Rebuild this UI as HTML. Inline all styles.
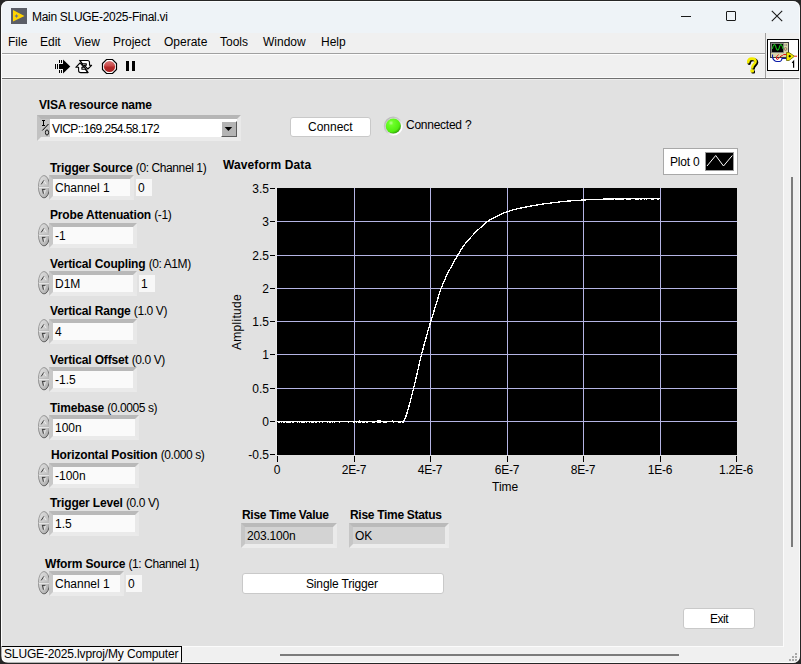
<!DOCTYPE html>
<html><head><meta charset="utf-8">
<style>
html,body{margin:0;padding:0;}
body{width:801px;height:664px;position:relative;overflow:hidden;background:#1e1e1e;font-family:"Liberation Sans",sans-serif;}
.a{position:absolute;}
.t{position:absolute;font-size:12px;line-height:12px;white-space:nowrap;color:#000;}
.b{font-weight:bold;}
#win{position:absolute;left:0;top:0;width:801px;height:664px;overflow:hidden;background:#e1e1e1;}
#edge{position:absolute;left:1px;top:1px;width:799px;height:662px;box-sizing:border-box;border-radius:7px;box-shadow:0 0 0 12px #262626,inset 0 0 0 1px rgba(255,255,255,0.7);}
.fr{position:absolute;box-sizing:border-box;border-style:solid;border-width:3px;border-color:#c3c3c3 #dadada #e9e9e9 #cfcfcf;background:#fafafa;}
.spin{position:absolute;width:12px;height:23px;}
.nbox{position:absolute;background:#f7f7f7;}
.btn{position:absolute;box-sizing:border-box;background:#fff;border:1px solid #c9c9c9;border-radius:3px;}
.yl{position:absolute;font-size:12px;line-height:12px;white-space:nowrap;text-align:right;width:40px;}
.xl{position:absolute;font-size:12px;line-height:12px;white-space:nowrap;text-align:center;width:60px;}
</style></head><body>
<div id="win">
<!-- title bar -->
<div class="a" style="left:0;top:0;width:801px;height:33px;background:#eef3f7;"></div>
<svg class="a" style="left:11px;top:8px" width="16" height="16" viewBox="0 0 16 16">
 <rect x="0" y="0" width="16" height="16" fill="#5b5e66"/>
 <path d="M2,2 L13.5,8 L2,13.5 Z" fill="#ffd400"/>
 <path d="M5.5,6 L6.2,7.3 L7.5,8 L6.2,8.7 L5.5,10 L4.8,8.7 L3.5,8 L4.8,7.3Z" fill="#66708a"/>
</svg>
<div class="t" style="left:32px;top:11px;letter-spacing:-0.3px;">Main SLUGE-2025-Final.vi</div>
<!-- window controls -->
<div class="a" style="left:681px;top:16px;width:10px;height:1px;background:#1a1a1a;"></div>
<div class="a" style="left:726px;top:11px;width:8px;height:8px;border:1px solid #1a1a1a;border-radius:1px;"></div>
<svg class="a" style="left:771px;top:10px" width="12" height="12" viewBox="0 0 12 12"><path d="M0.8,0.8 L11.2,11.2 M11.2,0.8 L0.8,11.2" stroke="#1a1a1a" stroke-width="1.1"/></svg>
<!-- menu bar -->
<div class="a" style="left:0;top:33px;width:801px;height:46px;background:#f0f0f0;"></div>
<div class="a" style="left:0;top:53px;width:765px;height:1px;background:#a0a0a0;"></div>
<div class="a" style="left:0;top:54px;width:765px;height:1px;background:#fdfdfd;"></div>
<div class="a" style="left:0;top:77px;width:801px;height:1px;background:#fbfbfb;"></div>
<div class="a" style="left:765px;top:33px;width:1px;height:46px;background:#a0a0a0;"></div>
<div class="a" style="left:0;top:78px;width:801px;height:1px;background:#707070;"></div>
<div class="t" style="left:8px;top:36px;">File</div>
<div class="t" style="left:40px;top:36px;">Edit</div>
<div class="t" style="left:74px;top:36px;">View</div>
<div class="t" style="left:113px;top:36px;">Project</div>
<div class="t" style="left:164px;top:36px;">Operate</div>
<div class="t" style="left:220px;top:36px;">Tools</div>
<div class="t" style="left:263px;top:36px;">Window</div>
<div class="t" style="left:321px;top:36px;">Help</div>
<!-- toolbar icons -->
<svg class="a" style="left:52px;top:56px" width="44" height="20" viewBox="0 0 44 20" shape-rendering="crispEdges">
 <rect x="3" y="8" width="1" height="5" fill="#000"/>
 <rect x="5" y="8" width="1" height="5" fill="#000"/>
 <rect x="7" y="4" width="1" height="3" fill="#000"/>
 <rect x="9" y="4" width="1" height="3" fill="#000"/>
 <rect x="7" y="14" width="1" height="3" fill="#000"/>
 <rect x="9" y="14" width="1" height="3" fill="#000"/>
 <rect x="7" y="8" width="5" height="5" fill="#000"/>
</svg>
<svg class="a" style="left:52px;top:56px" width="44" height="20" viewBox="0 0 44 20">
 <path d="M11,3.5 L18.3,10.5 L11,17.5 Z" fill="#000"/>
 <g transform="translate(21,1)">
 <path d="M7,3.5 L14.5,3.5 Q16.5,3.5 16.5,5.5 L16.5,8.3 L18.6,8.3 L14.8,12 L11.3,8.3 L13.3,8.3 L13.3,6.8 L9.4,6.8 Z" fill="#fff" stroke="#000" stroke-width="1.1" stroke-linejoin="round"/>
 <path d="M7,6 L11,10.3 L8.9,10.3 L8.9,12.2 L12.3,12.2 L14.8,15.6 L7.8,15.6 Q5.6,15.6 5.6,13.4 L5.6,10.3 L2.8,10.3 Z" fill="#fff" stroke="#000" stroke-width="1.1" stroke-linejoin="round"/>
 <path d="M6.5,3 L15.3,15.9" stroke="#000" stroke-width="1.1"/>
 </g>
</svg>
<svg class="a" style="left:101px;top:58px" width="17" height="17" viewBox="0 0 17 17">
 <defs><linearGradient id="rg" x1="0" y1="0" x2="0" y2="1"><stop offset="0" stop-color="#d87878"/><stop offset="0.45" stop-color="#c84848"/><stop offset="0.55" stop-color="#b42828"/><stop offset="1" stop-color="#a82424"/></linearGradient></defs>
 <path d="M5.5,1.5 L11.5,1.5 L15.5,5.5 L15.5,11.5 L11.5,15.5 L5.5,15.5 L1.5,11.5 L1.5,5.5 Z" fill="#fff" stroke="#000" stroke-width="1.2"/>
 <circle cx="8.5" cy="8.5" r="5.6" fill="url(#rg)"/>
</svg>
<div class="a" style="left:126px;top:61px;width:3px;height:10px;background:#000;"></div>
<div class="a" style="left:132px;top:61px;width:3px;height:10px;background:#000;"></div>
<!-- help icon -->
<svg class="a" style="left:745px;top:57px" width="16" height="18" viewBox="0 0 16 18">
 <g transform="translate(1,1)">
 <path d="M3.2,5.2 C3.2,1.8 5.3,1.6 7,1.6 C9,1.6 10.6,2.7 10.6,4.6 C10.6,6.8 7.2,7.6 7.2,10.4" fill="none" stroke="#000" stroke-width="3.4" stroke-linecap="round"/>
 <rect x="5.4" y="12.3" width="3.6" height="3.2" rx="1" fill="#000"/>
 </g>
 <path d="M3.2,5.2 C3.2,1.8 5.3,1.6 7,1.6 C9,1.6 10.6,2.7 10.6,4.6 C10.6,6.8 7.2,7.6 7.2,10.4" fill="none" stroke="#f2ea00" stroke-width="2.6" stroke-linecap="round"/>
 <rect x="5.4" y="12.3" width="3.6" height="3.2" rx="1" fill="#f2ea00"/>
</svg>
<!-- VI icon -->
<svg class="a" style="left:766px;top:38px" width="34" height="34" viewBox="0 0 34 34">
 <rect x="1.5" y="1.5" width="31" height="31" fill="#fff" stroke="#000" stroke-width="1"/>
 <rect x="4.5" y="4.5" width="18" height="15" fill="#d8d4aa" stroke="#3a3a3a" stroke-width="1"/>
 <rect x="5.5" y="5.5" width="12" height="9" fill="#000" stroke="#8a8a8a" stroke-width="0.8"/>
 <path d="M6.3,11 C7.5,5.5 9,5.5 10,9.5 C11,13 12.3,13 13.3,9.5 C14.3,5.5 15.8,5.5 17,11" fill="none" stroke="#18c018" stroke-width="1.1"/>
 <circle cx="19.5" cy="11" r="1.4" fill="#f0c090" stroke="#555" stroke-width="0.6"/>
 <path d="M19,6 v2 M20.5,6 v2" stroke="#777" stroke-width="0.6"/>
 <path d="M6.5,16.5 L6.5,19.5 Q8,23.5 11,23.5 L13.5,23.5 Q15.5,23.5 16,20.5 L21,20.5" fill="none" stroke="#0a1aa8" stroke-width="1.1"/>
 <path d="M12.5,16.5 Q9.5,19 10.5,21 Q12,22.5 13.5,19.5 Q15,17.5 16.5,17.5 L17.5,16.5 L21,16.5" fill="none" stroke="#e81010" stroke-width="1"/>
 <path d="M20.5,14.5 L23,14.5 L28.5,18.2 L23,22.5 L20.5,22.5 Z" fill="#f0e800" stroke="#6a6a00" stroke-width="0.8"/>
 <path d="M22.5,18.2 h2.4 M23.7,17 v2.4" stroke="#000" stroke-width="1"/>
 <path d="M28.5,18.2 L31,18.2" stroke="#e81010" stroke-width="1"/>
 <path d="M26.2,24.8 L27.6,23.3 L27.6,29.7" fill="none" stroke="#000" stroke-width="1.2"/>
</svg>
<!-- panel -->
<div class="a" style="left:0;top:79px;width:783px;height:567px;background:#e1e1e1;"></div>
<div class="a" style="left:0;top:79px;width:783px;height:1px;background:#ededed;"></div>
<div class="a" style="left:1px;top:33px;width:1px;height:613px;background:#fbfbfb;"></div>
<!-- vertical scrollbar -->
<div class="a" style="left:783px;top:79px;width:18px;height:567px;background:#f0f0f0;"></div>
<div class="a" style="left:791px;top:177px;width:2px;height:370px;background:#7c7c7c;"></div>
<!-- horizontal scrollbar -->
<div class="a" style="left:0;top:646px;width:801px;height:18px;background:#f0f0f0;"></div>
<div class="a" style="left:280px;top:654px;width:399px;height:2px;background:#7c7c7c;"></div>
<div class="a" style="left:783px;top:79px;width:1px;height:568px;background:#fbfbfb;"></div>
<div class="a" style="left:0;top:646px;width:784px;height:1px;background:#fbfbfb;"></div>
<svg class="a" style="left:788px;top:652px" width="11" height="11" shape-rendering="crispEdges"><g fill="#a8a8a8"><rect x="7" y="1" width="2" height="2"/><rect x="4" y="4" width="2" height="2"/><rect x="7" y="4" width="2" height="2"/><rect x="1" y="7" width="2" height="2"/><rect x="4" y="7" width="2" height="2"/><rect x="7" y="7" width="2" height="2"/></g></svg>
<!-- status box -->
<div class="a" style="left:1px;top:646px;width:181px;height:17px;box-sizing:border-box;border:1px solid #000;background:#f6f6f6;"></div>
<div class="t" style="left:4px;top:648px;letter-spacing:-0.15px;">SLUGE-2025.lvproj/My Computer</div>

<svg width="0" height="0" style="position:absolute"><defs><linearGradient id="sgf" x1="0" y1="0" x2="1" y2="1"><stop offset="0" stop-color="#e2e2e2"/><stop offset="0.55" stop-color="#c6c6c6"/><stop offset="1" stop-color="#a4a4a4"/></linearGradient><linearGradient id="sgs" x1="0" y1="0" x2="1" y2="1"><stop offset="0" stop-color="#a8a8a8"/><stop offset="0.5" stop-color="#7a7a7a"/><stop offset="1" stop-color="#303030"/></linearGradient></defs></svg>
<div class="t b" style="left:39px;top:99px;letter-spacing:-0.2px;">VISA resource name</div>
<div class="fr" style="left:37px;top:115px;width:204px;height:26px;border-width:4px;border-color:#b6b6b6 #e9e9e9 #ebebeb #c2c2c2;background:#fff;"></div>
<div class="a" style="left:41px;top:119px;width:9px;height:18px;background:#c6c6c6;"></div>
<svg class="a" style="left:40px;top:119px" width="11" height="18" viewBox="0 0 11 18"><path d="M2,1.5 h3 M3.5,1.5 v5 M2,6.5 h3" stroke="#000" stroke-width="1" fill="none"/><path d="M2.3,11.5 L8.5,5" stroke="#000" stroke-width="1"/><ellipse cx="7" cy="13.5" rx="1.6" ry="2.6" fill="none" stroke="#000" stroke-width="0.9"/></svg>
<div class="t" style="left:52px;top:123px;letter-spacing:-0.55px;">VICP::169.254.58.172</div>
<div class="a" style="left:221px;top:121px;width:16px;height:16px;box-sizing:border-box;background:#b4b4b4;border:1px solid;border-color:#ffffff #5a5a5a #5a5a5a #ffffff;"></div>
<svg class="a" style="left:221px;top:121px" width="16" height="16"><path d="M3.7,5.9 L11.2,5.9 L7.45,10 Z" fill="#000"/></svg>
<div class="btn" style="left:290px;top:117px;width:81px;height:20px;"></div>
<div class="t" style="left:308px;top:121px;">Connect</div>
<svg class="a" style="left:383px;top:116px" width="21" height="21" viewBox="0 0 21 21">
<defs><radialGradient id="led" cx="0.35" cy="0.3" r="0.75"><stop offset="0" stop-color="#b8ff90"/><stop offset="0.22" stop-color="#6cff28"/><stop offset="0.75" stop-color="#52ee10"/><stop offset="1" stop-color="#2c9a06"/></radialGradient>
<linearGradient id="ledr" x1="0" y1="0" x2="1" y2="1"><stop offset="0" stop-color="#b4b4b4"/><stop offset="0.5" stop-color="#cfcfcf"/><stop offset="0.75" stop-color="#ffffff"/><stop offset="1" stop-color="#ffffff"/></linearGradient></defs>
<circle cx="10.3" cy="10" r="8.7" fill="none" stroke="url(#ledr)" stroke-width="1.6"/>
<circle cx="10.3" cy="10" r="7.6" fill="url(#led)"/>
</svg>
<div class="t" style="left:406px;top:119px;letter-spacing:-0.25px;">Connected ?</div>
<div class="t" style="left:50px;top:162px;letter-spacing:-0.15px;"><b>Trigger Source</b> <span style="letter-spacing:-0.4px">(0: Channel 1)</span></div>
<svg class="a" style="left:38px;top:175px" width="12" height="24" viewBox="0 0 12 24">
<ellipse cx="6" cy="11.7" rx="5.6" ry="11.2" fill="url(#sgf)" stroke="url(#sgs)" stroke-width="0.9"/>
<path d="M0.8,12.3 h10.4" stroke="#f2f2f2" stroke-width="0.9"/>
<path d="M0.8,11.4 h10.4" stroke="#b0b0b0" stroke-width="0.6"/>
<path d="M3.2,9.4 L5.8,5.4" stroke="#3a3a3a" stroke-width="1"/>
<path d="M6,6 L8.2,9.2" stroke="#f4f4f4" stroke-width="0.9"/>
<path d="M3.9,14.4 h3.6 M4.5,14.5 L5.4,18.7" stroke="#3a3a3a" stroke-width="1"/>
<path d="M7.3,14.7 L6.5,18.5" stroke="#f4f4f4" stroke-width="0.9"/>
</svg>
<div class="fr" style="left:49px;top:175px;width:85px;height:25px;border-width:4px 4px 4px 4px;border-color:#b9b9b9 #e8e8e8 #eaeaea #c8c8c8;"></div>
<div class="t" style="left:55px;top:182px;">Channel 1</div>
<div class="nbox" style="left:136px;top:179px;width:16px;height:17px;"></div>
<div class="t" style="left:138px;top:182px;">0</div>
<div class="t" style="left:50px;top:209px;letter-spacing:-0.15px;"><b>Probe Attenuation</b> <span style="letter-spacing:-0.4px">(-1)</span></div>
<svg class="a" style="left:38px;top:223px" width="12" height="24" viewBox="0 0 12 24">
<ellipse cx="6" cy="11.7" rx="5.6" ry="11.2" fill="url(#sgf)" stroke="url(#sgs)" stroke-width="0.9"/>
<path d="M0.8,12.3 h10.4" stroke="#f2f2f2" stroke-width="0.9"/>
<path d="M0.8,11.4 h10.4" stroke="#b0b0b0" stroke-width="0.6"/>
<path d="M3.2,9.4 L5.8,5.4" stroke="#3a3a3a" stroke-width="1"/>
<path d="M6,6 L8.2,9.2" stroke="#f4f4f4" stroke-width="0.9"/>
<path d="M3.9,14.4 h3.6 M4.5,14.5 L5.4,18.7" stroke="#3a3a3a" stroke-width="1"/>
<path d="M7.3,14.7 L6.5,18.5" stroke="#f4f4f4" stroke-width="0.9"/>
</svg>
<div class="fr" style="left:49px;top:223px;width:88px;height:25px;border-width:4px 4px 4px 4px;border-color:#b9b9b9 #e8e8e8 #eaeaea #c8c8c8;"></div>
<div class="t" style="left:55px;top:230px;">-1</div>
<div class="t" style="left:50px;top:258px;letter-spacing:-0.15px;"><b>Vertical Coupling</b> <span style="letter-spacing:-0.4px">(0: A1M)</span></div>
<svg class="a" style="left:38px;top:271px" width="12" height="24" viewBox="0 0 12 24">
<ellipse cx="6" cy="11.7" rx="5.6" ry="11.2" fill="url(#sgf)" stroke="url(#sgs)" stroke-width="0.9"/>
<path d="M0.8,12.3 h10.4" stroke="#f2f2f2" stroke-width="0.9"/>
<path d="M0.8,11.4 h10.4" stroke="#b0b0b0" stroke-width="0.6"/>
<path d="M3.2,9.4 L5.8,5.4" stroke="#3a3a3a" stroke-width="1"/>
<path d="M6,6 L8.2,9.2" stroke="#f4f4f4" stroke-width="0.9"/>
<path d="M3.9,14.4 h3.6 M4.5,14.5 L5.4,18.7" stroke="#3a3a3a" stroke-width="1"/>
<path d="M7.3,14.7 L6.5,18.5" stroke="#f4f4f4" stroke-width="0.9"/>
</svg>
<div class="fr" style="left:49px;top:271px;width:88px;height:25px;border-width:4px 4px 4px 4px;border-color:#b9b9b9 #e8e8e8 #eaeaea #c8c8c8;"></div>
<div class="t" style="left:55px;top:278px;">D1M</div>
<div class="nbox" style="left:139px;top:275px;width:16px;height:17px;"></div>
<div class="t" style="left:141px;top:278px;">1</div>
<div class="t" style="left:50px;top:305px;letter-spacing:-0.15px;"><b>Vertical Range</b> <span style="letter-spacing:-0.4px">(1.0 V)</span></div>
<svg class="a" style="left:38px;top:319px" width="12" height="24" viewBox="0 0 12 24">
<ellipse cx="6" cy="11.7" rx="5.6" ry="11.2" fill="url(#sgf)" stroke="url(#sgs)" stroke-width="0.9"/>
<path d="M0.8,12.3 h10.4" stroke="#f2f2f2" stroke-width="0.9"/>
<path d="M0.8,11.4 h10.4" stroke="#b0b0b0" stroke-width="0.6"/>
<path d="M3.2,9.4 L5.8,5.4" stroke="#3a3a3a" stroke-width="1"/>
<path d="M6,6 L8.2,9.2" stroke="#f4f4f4" stroke-width="0.9"/>
<path d="M3.9,14.4 h3.6 M4.5,14.5 L5.4,18.7" stroke="#3a3a3a" stroke-width="1"/>
<path d="M7.3,14.7 L6.5,18.5" stroke="#f4f4f4" stroke-width="0.9"/>
</svg>
<div class="fr" style="left:49px;top:319px;width:88px;height:25px;border-width:4px 4px 4px 4px;border-color:#b9b9b9 #e8e8e8 #eaeaea #c8c8c8;"></div>
<div class="t" style="left:55px;top:326px;">4</div>
<div class="t" style="left:50px;top:354px;letter-spacing:-0.15px;"><b>Vertical Offset</b> <span style="letter-spacing:-0.4px">(0.0 V)</span></div>
<svg class="a" style="left:38px;top:367px" width="12" height="24" viewBox="0 0 12 24">
<ellipse cx="6" cy="11.7" rx="5.6" ry="11.2" fill="url(#sgf)" stroke="url(#sgs)" stroke-width="0.9"/>
<path d="M0.8,12.3 h10.4" stroke="#f2f2f2" stroke-width="0.9"/>
<path d="M0.8,11.4 h10.4" stroke="#b0b0b0" stroke-width="0.6"/>
<path d="M3.2,9.4 L5.8,5.4" stroke="#3a3a3a" stroke-width="1"/>
<path d="M6,6 L8.2,9.2" stroke="#f4f4f4" stroke-width="0.9"/>
<path d="M3.9,14.4 h3.6 M4.5,14.5 L5.4,18.7" stroke="#3a3a3a" stroke-width="1"/>
<path d="M7.3,14.7 L6.5,18.5" stroke="#f4f4f4" stroke-width="0.9"/>
</svg>
<div class="fr" style="left:49px;top:367px;width:88px;height:25px;border-width:4px 4px 4px 4px;border-color:#b9b9b9 #e8e8e8 #eaeaea #c8c8c8;"></div>
<div class="t" style="left:55px;top:374px;">-1.5</div>
<div class="t" style="left:50px;top:402px;letter-spacing:-0.15px;"><b>Timebase</b> <span style="letter-spacing:-0.4px">(0.0005 s)</span></div>
<svg class="a" style="left:38px;top:415px" width="12" height="24" viewBox="0 0 12 24">
<ellipse cx="6" cy="11.7" rx="5.6" ry="11.2" fill="url(#sgf)" stroke="url(#sgs)" stroke-width="0.9"/>
<path d="M0.8,12.3 h10.4" stroke="#f2f2f2" stroke-width="0.9"/>
<path d="M0.8,11.4 h10.4" stroke="#b0b0b0" stroke-width="0.6"/>
<path d="M3.2,9.4 L5.8,5.4" stroke="#3a3a3a" stroke-width="1"/>
<path d="M6,6 L8.2,9.2" stroke="#f4f4f4" stroke-width="0.9"/>
<path d="M3.9,14.4 h3.6 M4.5,14.5 L5.4,18.7" stroke="#3a3a3a" stroke-width="1"/>
<path d="M7.3,14.7 L6.5,18.5" stroke="#f4f4f4" stroke-width="0.9"/>
</svg>
<div class="fr" style="left:49px;top:415px;width:90px;height:25px;border-width:4px 4px 4px 4px;border-color:#b9b9b9 #e8e8e8 #eaeaea #c8c8c8;"></div>
<div class="t" style="left:55px;top:422px;">100n</div>
<div class="t" style="left:51px;top:449px;letter-spacing:-0.15px;"><b>Horizontal Position</b> <span style="letter-spacing:-0.4px">(0.000 s)</span></div>
<svg class="a" style="left:38px;top:463px" width="12" height="24" viewBox="0 0 12 24">
<ellipse cx="6" cy="11.7" rx="5.6" ry="11.2" fill="url(#sgf)" stroke="url(#sgs)" stroke-width="0.9"/>
<path d="M0.8,12.3 h10.4" stroke="#f2f2f2" stroke-width="0.9"/>
<path d="M0.8,11.4 h10.4" stroke="#b0b0b0" stroke-width="0.6"/>
<path d="M3.2,9.4 L5.8,5.4" stroke="#3a3a3a" stroke-width="1"/>
<path d="M6,6 L8.2,9.2" stroke="#f4f4f4" stroke-width="0.9"/>
<path d="M3.9,14.4 h3.6 M4.5,14.5 L5.4,18.7" stroke="#3a3a3a" stroke-width="1"/>
<path d="M7.3,14.7 L6.5,18.5" stroke="#f4f4f4" stroke-width="0.9"/>
</svg>
<div class="fr" style="left:49px;top:463px;width:90px;height:25px;border-width:4px 4px 4px 4px;border-color:#b9b9b9 #e8e8e8 #eaeaea #c8c8c8;"></div>
<div class="t" style="left:55px;top:470px;">-100n</div>
<div class="t" style="left:50px;top:497px;letter-spacing:-0.15px;"><b>Trigger Level</b> <span style="letter-spacing:-0.4px">(0.0 V)</span></div>
<svg class="a" style="left:38px;top:511px" width="12" height="24" viewBox="0 0 12 24">
<ellipse cx="6" cy="11.7" rx="5.6" ry="11.2" fill="url(#sgf)" stroke="url(#sgs)" stroke-width="0.9"/>
<path d="M0.8,12.3 h10.4" stroke="#f2f2f2" stroke-width="0.9"/>
<path d="M0.8,11.4 h10.4" stroke="#b0b0b0" stroke-width="0.6"/>
<path d="M3.2,9.4 L5.8,5.4" stroke="#3a3a3a" stroke-width="1"/>
<path d="M6,6 L8.2,9.2" stroke="#f4f4f4" stroke-width="0.9"/>
<path d="M3.9,14.4 h3.6 M4.5,14.5 L5.4,18.7" stroke="#3a3a3a" stroke-width="1"/>
<path d="M7.3,14.7 L6.5,18.5" stroke="#f4f4f4" stroke-width="0.9"/>
</svg>
<div class="fr" style="left:49px;top:511px;width:90px;height:25px;border-width:4px 4px 4px 4px;border-color:#b9b9b9 #e8e8e8 #eaeaea #c8c8c8;"></div>
<div class="t" style="left:55px;top:518px;">1.5</div>
<div class="t" style="left:45px;top:558px;letter-spacing:-0.15px;"><b>Wform Source</b> <span style="letter-spacing:-0.4px">(1: Channel 1)</span></div>
<svg class="a" style="left:38px;top:571px" width="12" height="24" viewBox="0 0 12 24">
<ellipse cx="6" cy="11.7" rx="5.6" ry="11.2" fill="url(#sgf)" stroke="url(#sgs)" stroke-width="0.9"/>
<path d="M0.8,12.3 h10.4" stroke="#f2f2f2" stroke-width="0.9"/>
<path d="M0.8,11.4 h10.4" stroke="#b0b0b0" stroke-width="0.6"/>
<path d="M3.2,9.4 L5.8,5.4" stroke="#3a3a3a" stroke-width="1"/>
<path d="M6,6 L8.2,9.2" stroke="#f4f4f4" stroke-width="0.9"/>
<path d="M3.9,14.4 h3.6 M4.5,14.5 L5.4,18.7" stroke="#3a3a3a" stroke-width="1"/>
<path d="M7.3,14.7 L6.5,18.5" stroke="#f4f4f4" stroke-width="0.9"/>
</svg>
<div class="fr" style="left:49px;top:571px;width:75px;height:25px;border-width:4px 4px 4px 4px;border-color:#b9b9b9 #e8e8e8 #eaeaea #c8c8c8;"></div>
<div class="t" style="left:55px;top:578px;">Channel 1</div>
<div class="nbox" style="left:126px;top:575px;width:16px;height:17px;"></div>
<div class="t" style="left:128px;top:578px;">0</div>
<div class="t b" style="left:223px;top:159px;letter-spacing:0.1px;">Waveform Data</div>
<div class="a" style="left:663px;top:148px;width:75px;height:27px;box-sizing:border-box;border:1px solid #a8a8a8;background:#fff;"></div>
<div class="t" style="left:670px;top:156px;letter-spacing:-0.2px;">Plot 0</div>
<div class="a" style="left:705px;top:152px;width:29px;height:19px;box-sizing:border-box;border:1px solid #9a9a9a;background:#000;"></div>
<svg class="a" style="left:705px;top:152px" width="29" height="19"><polyline points="2,14 10.7,3.5 18.5,14 27.3,3.5" fill="none" stroke="#fff" stroke-width="1"/></svg>
<svg class="a" style="left:0;top:0" width="801" height="664" shape-rendering="crispEdges">
<rect x="276" y="187" width="1" height="269" fill="#e9e9e9"/>
<rect x="277" y="188" width="460" height="267" fill="#000"/>
<rect x="277" y="221" width="460" height="1" fill="#b4b4e4"/>
<rect x="277" y="255" width="460" height="1" fill="#b4b4e4"/>
<rect x="277" y="288" width="460" height="1" fill="#b4b4e4"/>
<rect x="277" y="321" width="460" height="1" fill="#b4b4e4"/>
<rect x="277" y="354" width="460" height="1" fill="#b4b4e4"/>
<rect x="277" y="388" width="460" height="1" fill="#b4b4e4"/>
<rect x="277" y="421" width="460" height="1" fill="#b4b4e4"/>
<rect x="354" y="188" width="1" height="267" fill="#b4b4e4"/>
<rect x="430" y="188" width="1" height="267" fill="#b4b4e4"/>
<rect x="507" y="188" width="1" height="267" fill="#b4b4e4"/>
<rect x="583" y="188" width="1" height="267" fill="#b4b4e4"/>
<rect x="660" y="188" width="1" height="267" fill="#b4b4e4"/>
<rect x="270" y="188" width="5" height="1" fill="#000"/>
<rect x="270" y="221" width="5" height="1" fill="#000"/>
<rect x="270" y="255" width="5" height="1" fill="#000"/>
<rect x="270" y="288" width="5" height="1" fill="#000"/>
<rect x="270" y="321" width="5" height="1" fill="#000"/>
<rect x="270" y="354" width="5" height="1" fill="#000"/>
<rect x="270" y="388" width="5" height="1" fill="#000"/>
<rect x="270" y="421" width="5" height="1" fill="#000"/>
<rect x="270" y="454" width="5" height="1" fill="#000"/>
<rect x="277" y="456" width="1" height="6" fill="#000"/>
<rect x="354" y="456" width="1" height="6" fill="#000"/>
<rect x="430" y="456" width="1" height="6" fill="#000"/>
<rect x="507" y="456" width="1" height="6" fill="#000"/>
<rect x="583" y="456" width="1" height="6" fill="#000"/>
<rect x="660" y="456" width="1" height="6" fill="#000"/>
<rect x="736" y="456" width="1" height="6" fill="#000"/>
</svg>
<svg class="a" style="left:0;top:0" width="801" height="664" shape-rendering="crispEdges"><rect x="277" y="421" width="127" height="1" fill="#fff"/><rect x="278" y="422" width="1" height="1" fill="#fff"/><rect x="279" y="422" width="1" height="1" fill="#fff"/><rect x="281" y="422" width="1" height="1" fill="#fff"/><rect x="283" y="422" width="1" height="1" fill="#fff"/><rect x="284" y="422" width="1" height="1" fill="#fff"/><rect x="286" y="422" width="1" height="1" fill="#fff"/><rect x="287" y="422" width="1" height="1" fill="#fff"/><rect x="288" y="422" width="1" height="1" fill="#fff"/><rect x="289" y="422" width="1" height="1" fill="#fff"/><rect x="290" y="422" width="1" height="1" fill="#fff"/><rect x="292" y="422" width="1" height="1" fill="#fff"/><rect x="293" y="422" width="1" height="1" fill="#fff"/><rect x="297" y="422" width="1" height="1" fill="#fff"/><rect x="299" y="422" width="1" height="1" fill="#fff"/><rect x="301" y="422" width="1" height="1" fill="#fff"/><rect x="302" y="422" width="1" height="1" fill="#fff"/><rect x="303" y="422" width="1" height="1" fill="#fff"/><rect x="304" y="422" width="1" height="1" fill="#fff"/><rect x="306" y="422" width="1" height="1" fill="#fff"/><rect x="309" y="422" width="1" height="1" fill="#fff"/><rect x="311" y="422" width="1" height="1" fill="#fff"/><rect x="312" y="422" width="1" height="1" fill="#fff"/><rect x="313" y="422" width="1" height="1" fill="#fff"/><rect x="315" y="422" width="1" height="1" fill="#fff"/><rect x="316" y="422" width="1" height="1" fill="#fff"/><rect x="319" y="422" width="1" height="1" fill="#fff"/><rect x="322" y="422" width="1" height="1" fill="#fff"/><rect x="327" y="422" width="1" height="1" fill="#fff"/><rect x="329" y="422" width="1" height="1" fill="#fff"/><rect x="330" y="422" width="1" height="1" fill="#fff"/><rect x="332" y="422" width="1" height="1" fill="#fff"/><rect x="334" y="422" width="1" height="1" fill="#fff"/><rect x="339" y="422" width="1" height="1" fill="#fff"/><rect x="348" y="422" width="1" height="1" fill="#fff"/><rect x="353" y="422" width="1" height="1" fill="#fff"/><rect x="354" y="422" width="1" height="1" fill="#fff"/><rect x="356" y="422" width="1" height="1" fill="#fff"/><rect x="358" y="422" width="1" height="1" fill="#fff"/><rect x="359" y="422" width="1" height="1" fill="#fff"/><rect x="360" y="422" width="1" height="1" fill="#fff"/><rect x="362" y="422" width="1" height="1" fill="#fff"/><rect x="363" y="422" width="1" height="1" fill="#fff"/><rect x="364" y="422" width="1" height="1" fill="#fff"/><rect x="366" y="422" width="1" height="1" fill="#fff"/><rect x="367" y="422" width="1" height="1" fill="#fff"/><rect x="372" y="422" width="1" height="1" fill="#fff"/><rect x="373" y="422" width="1" height="1" fill="#fff"/><rect x="374" y="422" width="1" height="1" fill="#fff"/><rect x="377" y="422" width="1" height="1" fill="#fff"/><rect x="378" y="422" width="1" height="1" fill="#fff"/><rect x="379" y="422" width="1" height="1" fill="#fff"/><rect x="380" y="422" width="1" height="1" fill="#fff"/><rect x="383" y="422" width="1" height="1" fill="#fff"/><rect x="384" y="422" width="1" height="1" fill="#fff"/><rect x="385" y="422" width="1" height="1" fill="#fff"/><rect x="386" y="422" width="1" height="1" fill="#fff"/><rect x="393" y="422" width="1" height="1" fill="#fff"/><rect x="398" y="422" width="1" height="1" fill="#fff"/><rect x="399" y="422" width="1" height="1" fill="#fff"/><rect x="400" y="422" width="1" height="1" fill="#fff"/><rect x="402" y="422" width="1" height="1" fill="#fff"/><rect x="403" y="422" width="1" height="1" fill="#fff"/><rect x="359" y="420" width="1" height="1" fill="#fff"/><rect x="377" y="420" width="1" height="1" fill="#fff"/><rect x="378" y="420" width="1" height="1" fill="#fff"/><rect x="379" y="420" width="1" height="1" fill="#fff"/><rect x="380" y="420" width="1" height="1" fill="#fff"/><rect x="392" y="420" width="1" height="1" fill="#fff"/><rect x="615" y="199" width="1" height="1" fill="#fff"/><rect x="616" y="199" width="1" height="1" fill="#fff"/><rect x="617" y="199" width="1" height="1" fill="#fff"/><rect x="618" y="199" width="1" height="1" fill="#fff"/><rect x="619" y="199" width="1" height="1" fill="#fff"/><rect x="620" y="199" width="1" height="1" fill="#fff"/><rect x="621" y="199" width="1" height="1" fill="#fff"/><rect x="622" y="199" width="1" height="1" fill="#fff"/><rect x="623" y="199" width="1" height="1" fill="#fff"/><rect x="626" y="199" width="1" height="1" fill="#fff"/><rect x="627" y="199" width="1" height="1" fill="#fff"/><rect x="628" y="199" width="1" height="1" fill="#fff"/><rect x="629" y="199" width="1" height="1" fill="#fff"/><rect x="630" y="199" width="1" height="1" fill="#fff"/><rect x="635" y="199" width="1" height="1" fill="#fff"/><rect x="636" y="199" width="1" height="1" fill="#fff"/><rect x="637" y="199" width="1" height="1" fill="#fff"/><rect x="638" y="199" width="1" height="1" fill="#fff"/><rect x="640" y="199" width="1" height="1" fill="#fff"/><rect x="641" y="199" width="1" height="1" fill="#fff"/><rect x="644" y="199" width="1" height="1" fill="#fff"/><rect x="646" y="199" width="1" height="1" fill="#fff"/><rect x="651" y="199" width="1" height="1" fill="#fff"/><rect x="652" y="199" width="1" height="1" fill="#fff"/><rect x="653" y="199" width="1" height="1" fill="#fff"/><rect x="657" y="199" width="1" height="1" fill="#fff"/><rect x="658" y="199" width="1" height="1" fill="#fff"/></svg>
<svg class="a" style="left:0;top:0" width="801" height="664"><polyline points="403.0,421.5 405.0,418.9 406.0,416.1 407.0,413.1 408.0,409.8 409.0,406.2 410.0,402.5 411.0,398.6 412.0,394.7 413.0,390.7 414.0,386.7 415.0,382.5 416.0,378.2 417.0,373.9 418.0,369.4 419.0,365.1 420.0,360.8 421.0,356.7 422.0,352.8 423.0,348.9 424.0,345.2 425.0,341.5 426.0,337.9 427.0,334.3 428.0,330.8 429.0,327.4 430.0,324.0 431.0,320.6 432.0,317.4 433.0,314.2 434.0,311.0 435.0,307.9 436.0,304.7 437.0,301.4 438.0,298.1 439.0,294.8 440.0,291.7 441.0,288.8 442.0,286.1 443.0,283.7 444.0,281.4 445.0,279.2 446.0,277.0 447.0,274.9 448.0,272.9 449.0,270.9 450.0,269.0 451.0,267.1 452.0,265.2 453.0,263.4 454.0,261.6 455.0,259.8 456.0,258.1 457.0,256.4 458.0,254.7 459.0,253.1 460.0,251.5 461.0,249.9 462.0,248.3 463.0,246.8 464.0,245.4 465.0,244.0 466.0,242.7 467.0,241.5 468.0,240.4 469.0,239.2 470.0,238.2 471.0,237.1 472.0,236.0 473.0,235.0 474.0,233.9 475.0,232.9 476.0,231.9 477.0,230.9 478.0,229.9 479.0,229.0 480.0,228.0 481.0,227.1 482.0,226.2 483.0,225.2 484.0,224.3 485.0,223.4 486.0,222.6 487.0,221.8 488.0,221.2 489.0,220.5 490.0,219.9 491.0,219.4 492.0,218.9 493.0,218.3 494.0,217.8 495.0,217.4 496.0,216.9 497.0,216.4 498.0,215.9 499.0,215.4 500.0,215.0 501.0,214.4 502.0,213.9 503.0,213.4 504.0,212.9 505.0,212.5 506.0,212.1 507.0,211.7 508.0,211.4 509.0,211.1 510.0,210.7 511.0,210.5 512.0,210.2 513.0,209.9 514.0,209.6 515.0,209.4 516.0,209.1 517.0,208.9 518.0,208.6 519.0,208.4 520.0,208.2 524.0,207.3 528.0,206.6 532.0,205.8 536.0,205.1 540.0,204.5 544.0,203.9 548.0,203.4 552.0,202.8 556.0,202.4 560.0,201.9 564.0,201.5 568.0,201.1 572.0,200.8 576.0,200.4 580.0,200.2 584.0,199.9 588.0,199.8 592.0,199.6 596.0,199.4 600.0,199.3 604.0,199.1 608.0,199.0 612.0,198.9 616.0,198.8 620.0,198.7 624.0,198.6 628.0,198.6 632.0,198.5 636.0,198.4 640.0,198.4 644.0,198.3 648.0,198.3 652.0,198.2 656.0,198.2 660.0,198.2" fill="none" stroke="#fff" stroke-width="1.3" shape-rendering="crispEdges"/></svg>
<div class="yl" style="left:229px;top:183px;">3.5</div>
<div class="yl" style="left:229px;top:216px;">3</div>
<div class="yl" style="left:229px;top:250px;">2.5</div>
<div class="yl" style="left:229px;top:283px;">2</div>
<div class="yl" style="left:229px;top:316px;">1.5</div>
<div class="yl" style="left:229px;top:349px;">1</div>
<div class="yl" style="left:229px;top:383px;">0.5</div>
<div class="yl" style="left:229px;top:416px;">0</div>
<div class="yl" style="left:229px;top:449px;">-0.5</div>
<div class="xl" style="left:247px;top:464px;letter-spacing:-0.2px;">0</div>
<div class="xl" style="left:324px;top:464px;letter-spacing:-0.2px;">2E-7</div>
<div class="xl" style="left:400px;top:464px;letter-spacing:-0.2px;">4E-7</div>
<div class="xl" style="left:477px;top:464px;letter-spacing:-0.2px;">6E-7</div>
<div class="xl" style="left:553px;top:464px;letter-spacing:-0.2px;">8E-7</div>
<div class="xl" style="left:630px;top:464px;letter-spacing:-0.2px;">1E-6</div>
<div class="xl" style="left:706px;top:464px;letter-spacing:-0.2px;">1.2E-6</div>
<div class="t" style="left:492px;top:481px;">Time</div>
<div class="t" style="left:237px;top:322px;transform:translate(-50%,-50%) rotate(-90deg);transform-origin:50% 50%;letter-spacing:0.3px;">Amplitude</div>
<div class="t b" style="left:242px;top:509px;letter-spacing:-0.3px;">Rise Time Value</div>
<div class="t b" style="left:350px;top:509px;letter-spacing:-0.3px;">Rise Time Status</div>
<div class="fr" style="left:241px;top:523px;width:96px;height:25px;border-width:4px;border-color:#bababa #eaeaea #ececec #c6c6c6;background:#d3d3d3;"></div>
<div class="fr" style="left:349px;top:523px;width:100px;height:25px;border-width:4px;border-color:#bababa #eaeaea #ececec #c6c6c6;background:#d3d3d3;"></div>
<div class="t" style="left:247px;top:530px;letter-spacing:-0.2px;">203.100n</div>
<div class="t" style="left:355px;top:530px;">OK</div>
<div class="btn" style="left:242px;top:573px;width:202px;height:21px;"></div>
<div class="t" style="left:306px;top:578px;letter-spacing:-0.15px;">Single Trigger</div>
<div class="btn" style="left:683px;top:608px;width:72px;height:21px;"></div>
<div class="t" style="left:710px;top:613px;letter-spacing:-0.5px;">Exit</div>
</div>
<div id="edge"></div>
</body></html>
